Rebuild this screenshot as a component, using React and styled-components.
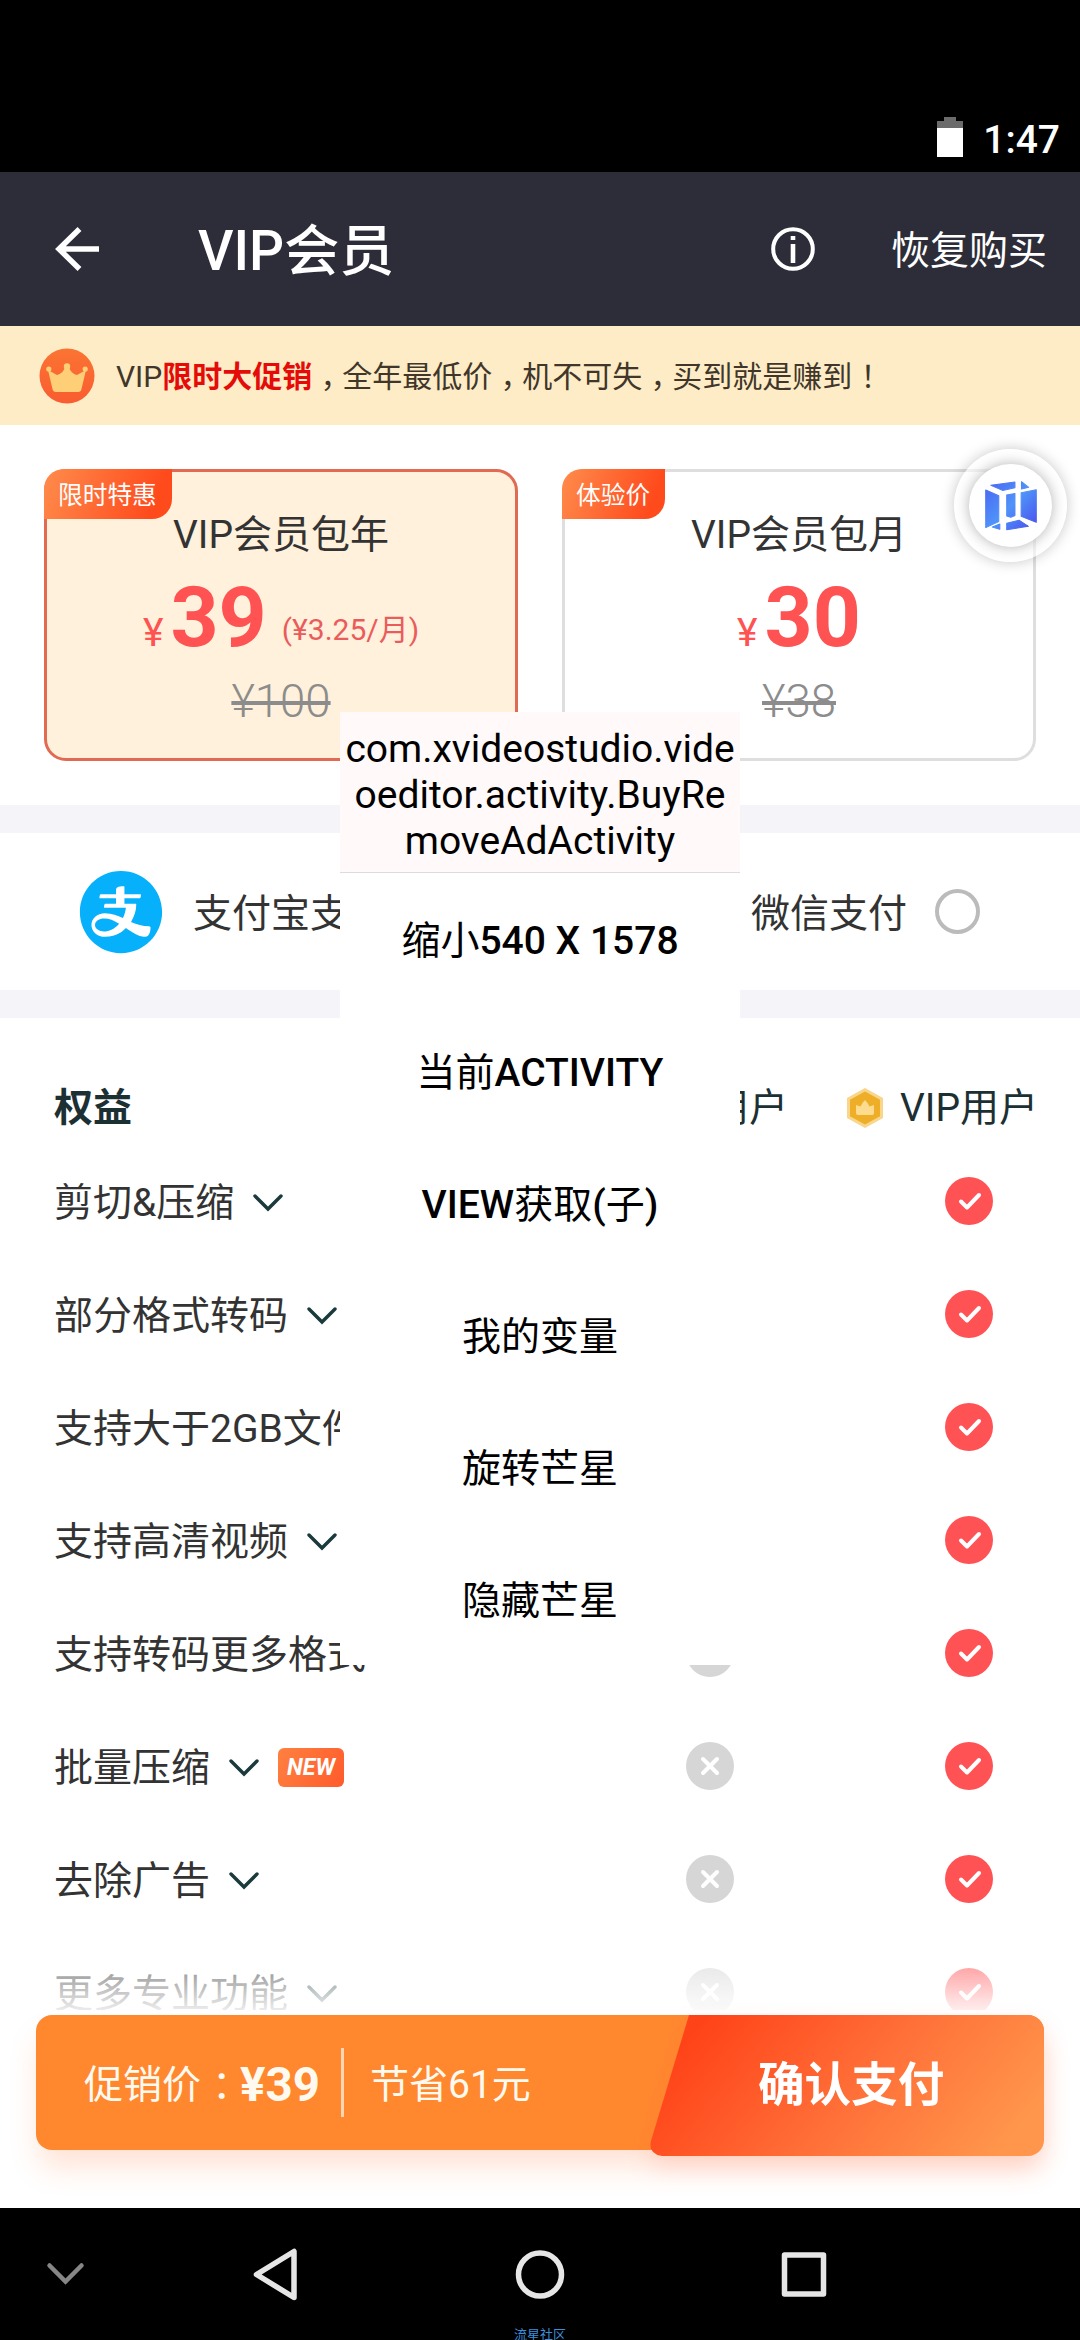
import styled, { createGlobalStyle } from "styled-components";
import { AiFillAlipayCircle, AiFillWechat } from "react-icons/ai";

const GlobalStyle = createGlobalStyle`
  * {
    box-sizing: border-box;
  }
  body {
    margin: 0;
    background: #000;
    font-family: Roboto, "Noto Sans CJK SC", sans-serif;
  }
  svg {
    display: block;
    flex: none;
  }
`;

const Screen = styled.div`
  position: relative;
  display: flex;
  flex-direction: column;
  width: 1080px;
  height: 2340px;
  overflow: hidden;
  background: #fff;
  color: #333;
  font-size: 39px;
  line-height: 46px;
  white-space: nowrap;
`;

const StatusBar = styled.div`
  display: flex;
  justify-content: flex-end;
  align-items: flex-end;
  gap: 20px;
  height: 172px;
  padding: 0 20px 15px 0;
  background: #000;
  color: #fff;
  font-weight: 500;
  line-height: 40px;
`;

const Clock = styled.span`
  height: 37px;
`;

const AppBar = styled.header`
  display: flex;
  align-items: center;
  height: 154px;
  padding: 0 33px 0 55px;
  background: #2c2d38;
  color: #fff;
`;

const Title = styled.h1`
  flex: 1;
  margin: 4px 0 0 99px;
  font-size: 55px;
  font-weight: 500;
  line-height: 64px;
`;

const Han = styled.span`
  font-weight: 400;
`;

const Restore = styled.span`
  margin: 4px 0 0 76px;
`;

const Banner = styled.div`
  display: flex;
  align-items: center;
  gap: 21px;
  height: 99px;
  padding-left: 39px;
  background: #feecc6;
  color: #40362a;
  font-size: 30px;
`;

const BannerText = styled.div`
  padding-top: 3px;
`;

const Hot = styled.b`
  color: #e50b08;
`;

// half width punctuation, centred in a full width cell
const Mark = styled.span`
  margin: 0 0.22em 0 0.28em;
  font-feature-settings: "halt";
`;

const Plans = styled.section`
  display: flex;
  gap: 44px;
  height: 380px;
  padding: 44px 44px 0;
`;

const Plan = styled.div`
  position: relative;
  display: flex;
  flex-direction: column;
  align-items: center;
  width: 474px;
  height: 292px;
  padding-top: 40px;
  border: 3px solid ${(props) => (props.$active ? "#e06a52" : "#dedede")};
  border-radius: 22px;
  background: ${(props) => (props.$active ? "#fff1db" : "#fff")};
`;

const Ribbon = styled.div`
  position: absolute;
  top: -3px;
  left: -3px;
  height: 50px;
  padding: 0 15px 0 14px;
  border-radius: 20px 0 20px 0;
  background: linear-gradient(110deg, #ff8c4c, #ff4a1c 85%);
  color: #fff;
  font-size: 24.7px;
  line-height: 53px;
`;

const Price = styled.div`
  display: flex;
  align-items: baseline;
  height: 84px;
  margin-top: 18px;
  color: #ff5252;
  line-height: 84px;
`;

const Yuan = styled.span`
  font-size: 39px;
`;

const Amount = styled.b`
  margin-left: 7px;
  font-size: 84px;
`;

const PerMonth = styled.span`
  position: relative;
  top: -6px;
  margin-left: 15px;
  font-size: 30px;
  color: #ea5c5c;
`;

const OldPrice = styled.del`
  margin-top: 16px;
  color: #8c8c8c;
  font-size: 45.5px;
  font-weight: 300;
  line-height: 52px;
`;

const Divider = styled.div`
  height: 28px;
  background: #f4f4f9;
`;

const Payment = styled.section`
  display: flex;
  align-items: center;
  height: 157px;
  padding: 0 100px 0 74px;
`;

const PayMethod = styled.div`
  display: flex;
  align-items: center;
  gap: 25px;
  margin-left: ${(props) => (props.$last ? "auto" : "0")};
`;

const PayName = styled.span`
  padding: 4px 3px 0 0;
`;

const Radio = styled.i`
  width: 45px;
  height: 45px;
  border: 4px solid #bbb;
  border-radius: 50%;
`;

const Benefits = styled.section`
  position: relative;
  height: 992px;
  margin-bottom: 5px;
  overflow: hidden;

  &::after {
    content: "";
    position: absolute;
    left: 0;
    right: 0;
    bottom: 0;
    height: 92px;
    background: linear-gradient(rgba(255, 255, 255, 0), rgba(255, 255, 255, 0.9));
  }
`;

const Row = styled.div`
  display: grid;
  grid-template-columns: 508px 296px 222px;
  align-items: center;
  height: 113px;
  padding-left: 54px;
`;

const HeadRow = styled(Row)`
  height: 126px;
  padding-top: 54px;
  color: #1c3034;
`;

const Cell = styled.div`
  display: flex;
  justify-content: center;
`;

const VipHead = styled.div`
  display: flex;
  justify-content: flex-end;
  align-items: center;
  gap: 16px;
  padding-right: 42px;
`;

const Label = styled.div`
  display: flex;
  align-items: center;
  padding-top: 4px;

  svg {
    margin: 0 19px;
  }
`;

const NewTag = styled.span`
  width: 66px;
  height: 39px;
  border-radius: 6px;
  background: linear-gradient(120deg, #ff8140, #ff5a2c);
  color: #fff;
  font-size: 23px;
  font-style: italic;
  font-weight: 700;
  line-height: 40px;
  text-align: center;
`;

const Footer = styled.footer`
  height: 193px;
  padding: 0 36px;
`;

const PayBar = styled.div`
  display: flex;
  position: relative;
  height: 135px;
  padding-left: 48px;
  align-items: center;
  border-radius: 16px;
  background: #ff882f;
  box-shadow: 0 20px 30px -4px rgba(255, 120, 50, 0.22);
  color: #fffaf0;
`;

const PayText = styled.span`
  padding-top: 5px;
`;

const Total = styled.b`
  padding-top: 4px;
  font-size: 47.5px;
`;

const Split = styled.i`
  width: 3px;
  height: 69px;
  margin: 0 26px 0 21px;
  background: rgba(255, 255, 255, 0.65);
`;

const Confirm = styled.div`
  position: absolute;
  top: 0;
  right: 0;
  width: 394px;
  height: 141px;
  filter: drop-shadow(0 12px 12px rgba(255, 80, 40, 0.14));
`;

const ConfirmText = styled.span`
  position: absolute;
  top: 0;
  left: 108px;
  color: #fff;
  font-size: 46.6px;
  font-weight: 700;
  line-height: 141px;
`;

const NavBar = styled.nav`
  position: relative;
  display: flex;
  align-items: center;
  height: 132px;
  padding-left: 46px;
  background: #000;
`;

const NavIcon = styled.svg`
  width: 56px;
  height: 56px;
  margin-left: ${(props) => props.$gap}px;
  fill: none;
  stroke: #e6e6e6;
  stroke-width: 5.5;
  stroke-linejoin: round;
`;

const Watermark = styled.span`
  position: absolute;
  left: 514px;
  top: 119px;
  color: #3b8fdc;
  font-size: 13px;
  line-height: 16px;
`;

const Popup = styled.div`
  position: absolute;
  top: 712px;
  left: 340px;
  width: 400px;
  background: #fff;
  color: #000;
  text-align: center;
`;

const PopupTitle = styled.div`
  height: 161px;
  padding: 14px 5px 0;
  border-bottom: 1px solid #dcdcdc;
  background: #fffaf9;
  line-height: 46px;
  white-space: normal;
  word-break: break-all;
`;

const PopupItem = styled.div`
  height: 132px;
  font-weight: 500;
  line-height: 136px;
`;

const Bubble = styled.div`
  position: absolute;
  top: 449px;
  left: 954px;
  display: flex;
  padding: 15px;
  border-radius: 50%;
  background: rgba(255, 255, 255, 0.6);
  box-shadow: 0 0 14px rgba(0, 0, 0, 0.22);
`;

const BubbleCore = styled.div`
  display: flex;
  align-items: center;
  justify-content: center;
  width: 83px;
  height: 83px;
  border-radius: 50%;
  background: #fff;
  box-shadow: 0 0 14px rgba(0, 0, 0, 0.3);
`;

const benefits = [
  { name: "剪切&压缩" },
  { name: "部分格式转码" },
  { name: "支持大于2GB文件" },
  { name: "支持高清视频" },
  { name: "支持转码更多格式" },
  { name: "批量压缩", isNew: true },
  { name: "去除广告" },
  { name: "更多专业功能" },
];

function Battery() {
  return (
    <svg width="26" height="40" viewBox="0 0 26 40">
      <path d="M7 0h12v4h7v7H0V4h7z" fill="#6b6b6b" />
      <path d="M0 11h26v29H0z" fill="#fff" />
    </svg>
  );
}

function Back() {
  return (
    <svg width="44" height="44" viewBox="0 0 44 44" fill="none" stroke="#fff" strokeWidth="5.5">
      <path d="M24.500 2L4 22l20.500 20M4 22h40" />
    </svg>
  );
}

function Info() {
  return (
    <svg width="44" height="44" viewBox="0 0 44 44">
      <circle cx="22" cy="22" r="19.800" fill="none" stroke="#fff" strokeWidth="4" />
      <path d="M19.700 9h4.600v4h-4.600zM19.700 17h4.600v19h-4.600z" fill="#fff" />
    </svg>
  );
}

function Crown() {
  return (
    <svg width="56" height="56" viewBox="0 0 56 56">
      <defs>
        <linearGradient id="crownBg" x1="0" y1="0" x2="0" y2="1">
          <stop offset="0" stopColor="#fb7433" />
          <stop offset="1" stopColor="#f95c30" />
        </linearGradient>
      </defs>
      <circle cx="28" cy="28" r="27.500" fill="url(#crownBg)" />
      <g fill="#ffcf78">
        <circle cx="28" cy="18.500" r="3.200" />
        <circle cx="9.800" cy="21" r="2.600" />
        <circle cx="46.200" cy="21" r="2.600" />
        <path d="M9 22l9 5c4-1 7-4 8-8h4c1 4 4 7 8 8l9-5-4.500 19c-.4 2-1.500 3-3.500 3H17c-2 0-3.100-1-3.500-3z" />
      </g>
    </svg>
  );
}

function Hexagon() {
  return (
    <svg width="38" height="42" viewBox="0 0 38 42">
      <path d="M19 1l18 10v20L19 41 1 31V11z" fill="#f8d68c" />
      <path d="M19 4.500l15 8.300v16.400l-15 8.300-15-8.300V12.800z" fill="#eeae27" />
      <path d="M19 13q3 3 4.500 6.500L28 18v8q0 2-2 2H12q-2 0-2-2v-8l4.500 1.500Q16 16 19 13z" fill="#fddc90" />
    </svg>
  );
}

function Chevron() {
  return (
    <svg width="30" height="18" viewBox="0 0 30 18" fill="none" stroke="#1b3a3c" strokeWidth="3.4" strokeLinecap="round">
      <path d="M2 2l13 13L28 2" />
    </svg>
  );
}

function Check() {
  return (
    <svg width="48" height="48" viewBox="0 0 48 48" fill="none">
      <circle cx="24" cy="24" r="24" fill="#ff5255" />
      <path d="M16 24.500l6 6L34 18" stroke="#fff" strokeWidth="4" strokeLinecap="round" strokeLinejoin="round" />
    </svg>
  );
}

function Cross() {
  return (
    <svg width="48" height="48" viewBox="0 0 48 48" fill="none">
      <circle cx="24" cy="24" r="24" fill="#d6d6d6" />
      <path d="M17 17l14 14M31 17L17 31" stroke="#fff" strokeWidth="4" strokeLinecap="round" />
    </svg>
  );
}

function Cube() {
  return (
    <svg width="54" height="51" viewBox="1290 152 157 152" preserveAspectRatio="none">
      <defs>
        <linearGradient id="cubeFill" gradientUnits="userSpaceOnUse" x1="1293" y1="157" x2="1443" y2="300">
          <stop offset="0" stopColor="#4a63f2" />
          <stop offset="0.5" stopColor="#4f93f9" />
          <stop offset="1" stopColor="#4a4cec" />
        </linearGradient>
      </defs>
      <g fill="url(#cubeFill)" stroke="url(#cubeFill)" strokeWidth="3" strokeLinejoin="round">
        <path d="M1310 168l70-10v17l-36 8z" />
        <path d="M1399 157l21 17-21 5z" />
        <path d="M1295 182l38 17v77l-38 18z" />
        <path d="M1356 197l24-5v66l-12 5-12-4z" />
        <path d="M1398 190l44-9v97l-44-18z" />
        <path d="M1314 292l22-9v16z" />
        <path d="M1356 281l36-9 27 18-63 10z" />
      </g>
    </svg>
  );
}

function App() {
  return (
    <Screen>
      <GlobalStyle />
      <StatusBar>
        <Battery />
        <Clock>1:47</Clock>
      </StatusBar>
      <AppBar>
        <Back />
        <Title>VIP会员</Title>
        <Info />
        <Restore>恢复购买</Restore>
      </AppBar>
      <Banner>
        <Crown />
        <BannerText>
          VIP<Hot>限时大促销</Hot>
          <Mark>，</Mark>全年最低价<Mark>，</Mark>机不可失<Mark>，</Mark>买到就是赚到<Mark>！</Mark>
        </BannerText>
      </Banner>
      <Plans>
        <Plan $active>
          <Ribbon>限时特惠</Ribbon>
          VIP会员包年
          <Price>
            <Yuan>¥</Yuan>
            <Amount>39</Amount>
            <PerMonth>(¥3.25/月)</PerMonth>
          </Price>
          <OldPrice>¥100</OldPrice>
        </Plan>
        <Plan>
          <Ribbon>体验价</Ribbon>
          VIP会员包月
          <Price>
            <Yuan>¥</Yuan>
            <Amount>30</Amount>
          </Price>
          <OldPrice>¥38</OldPrice>
        </Plan>
      </Plans>
      <Divider />
      <Payment>
        <PayMethod>
          <AiFillAlipayCircle size={94} color="#06b0fb" />
          <PayName>支付宝支付</PayName>
          <Radio />
        </PayMethod>
        <PayMethod $last>
          <AiFillWechat size={94} color="#3cb034" />
          <PayName>微信支付</PayName>
          <Radio />
        </PayMethod>
      </Payment>
      <Divider />
      <Benefits>
        <HeadRow>
          <b>权益</b>
          <Cell>普通用户</Cell>
          <VipHead>
            <Hexagon />
            VIP用户
          </VipHead>
        </HeadRow>
        {benefits.map((item) => (
          <Row key={item.name}>
            <Label>
              {item.name}
              <Chevron />
              {item.isNew && <NewTag>NEW</NewTag>}
            </Label>
            <Cell>
              <Cross />
            </Cell>
            <Cell>
              <Check />
            </Cell>
          </Row>
        ))}
      </Benefits>
      <Footer>
        <PayBar>
          <PayText>
            促销价<Mark>：</Mark>
          </PayText>
          <Total>¥39</Total>
          <Split />
          <PayText>节省61元</PayText>
          <Confirm>
            <svg width="394" height="141" viewBox="0 0 394 141">
              <defs>
                <linearGradient id="confirmBg" x1="0" y1="0.3" x2="1" y2="0.6">
                  <stop offset="0.05" stopColor="#ff4319" />
                  <stop offset="0.55" stopColor="#ff7038" />
                  <stop offset="1" stopColor="#ff964c" />
                </linearGradient>
              </defs>
              <path
                d="M39 0H378a16 16 0 0 1 16 16V125a16 16 0 0 1-16 16H12q-14-2-11-15z"
                fill="url(#confirmBg)"
              />
            </svg>
            <ConfirmText>确认支付</ConfirmText>
          </Confirm>
        </PayBar>
      </Footer>
      <NavBar>
        <svg width="39" height="24" viewBox="0 0 39 24" fill="none" stroke="#868686" strokeWidth="4.5" strokeLinecap="round">
          <path d="M3.500 3.500l16 16 16-16" />
        </svg>
        <NavIcon $gap={162} viewBox="0 0 56 56">
          <path d="M47 5.500v46L9.500 28.500z" />
        </NavIcon>
        <NavIcon $gap={209} viewBox="0 0 56 56">
          <circle cx="28" cy="28.500" r="21.500" />
        </NavIcon>
        <NavIcon $gap={208} viewBox="0 0 56 56">
          <rect x="8.500" y="9" width="39" height="39" />
        </NavIcon>
        <Watermark>流星社区</Watermark>
      </NavBar>
      <Popup>
        <PopupTitle>com.xvideostudio.videoeditor.activity.BuyRemoveAdActivity</PopupTitle>
        <PopupItem>
          <Han>缩小</Han>540 X 1578
        </PopupItem>
        <PopupItem>
          <Han>当前</Han>ACTIVITY
        </PopupItem>
        <PopupItem>
          VIEW<Han>获取</Han>(<Han>子</Han>)
        </PopupItem>
        <PopupItem>
          <Han>我的变量</Han>
        </PopupItem>
        <PopupItem>
          <Han>旋转芒星</Han>
        </PopupItem>
        <PopupItem>
          <Han>隐藏芒星</Han>
        </PopupItem>
      </Popup>
      <Bubble>
        <BubbleCore>
          <Cube />
        </BubbleCore>
      </Bubble>
    </Screen>
  );
}

export default App;
